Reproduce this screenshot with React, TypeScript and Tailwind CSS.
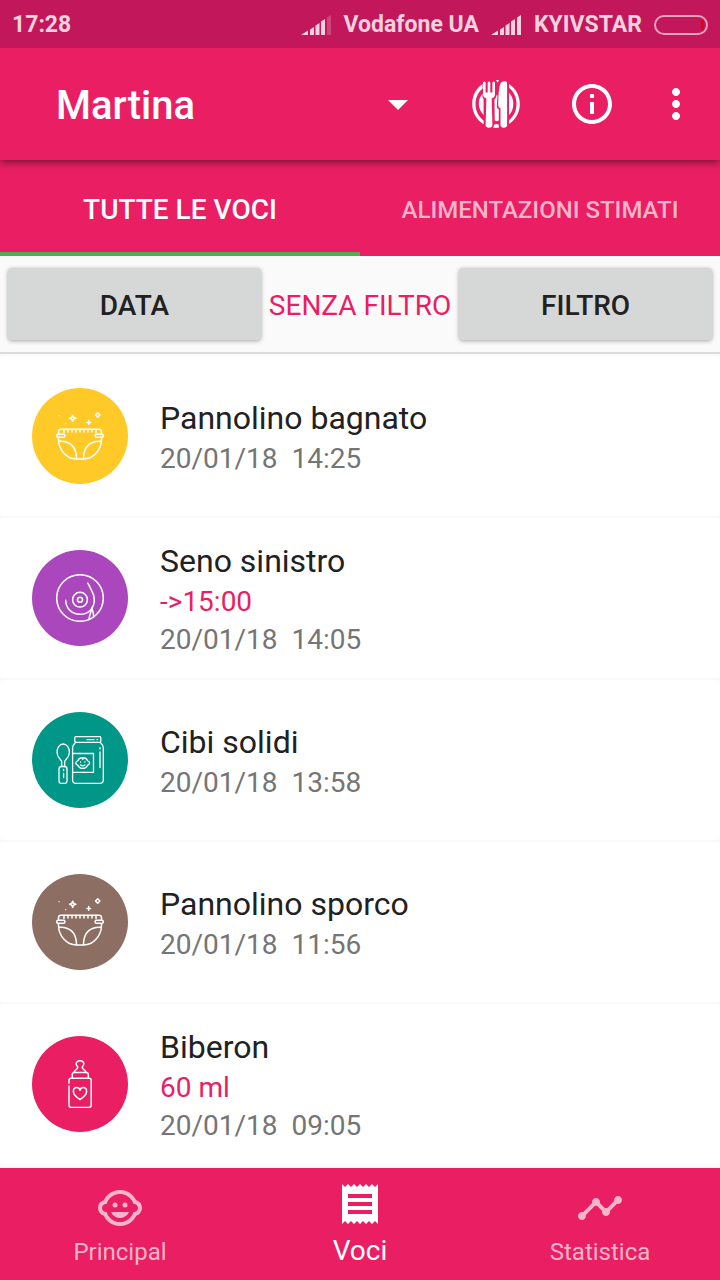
import React, { useState } from 'react';
import {
  MdArrowDropDown,
  MdChildCare,
  MdInfoOutline,
  MdMoreVert,
  MdReceipt,
  MdTimeline,
} from 'react-icons/md';

type IconProps = { className?: string };

type Entry = {
  title: string;
  detail?: string;
  date: string;
  color: string;
  icon: React.ComponentType<IconProps>;
};

const lineIcon = {
  viewBox: '0 0 48 48',
  fill: 'none',
  stroke: 'currentColor',
  strokeWidth: 1.5,
  strokeLinecap: 'round' as const,
  strokeLinejoin: 'round' as const,
  'aria-hidden': true,
};

function DiaperIcon({ className }: IconProps) {
  return (
    <svg {...lineIcon} className={className}>
      {/* sparkles */}
      <path d="M16.7 3.2 Q17 6 19.8 6.3 Q17 6.6 16.7 9.4 Q16.4 6.6 13.6 6.3 Q16.4 6 16.7 3.2Z" />
      <path d="M32.7 8.6v3.6M30.9 10.4h3.6" />
      <path d="M41.7.8 43.9 3 41.7 5.2 39.5 3Z" />
      <path d="M3 3.7h.1M9.7 11.7h.1" strokeWidth={1.2} />
      {/* diaper */}
      <path d="M2.5 22V19.5Q2.5 17.2 5 17.2H43Q45.5 17.2 45.5 19.5V22" />
      <path d="M8 17.5v3M12 17.5v2.4M16 17.5v2.4M20 17.5v2.4M24 17.5v2.4M28 17.5v2.4M32 17.5v2.4M36 17.5v2.4M40 17.5v3" />
      <rect x="0.8" y="22.3" width="8" height="3" rx="1" />
      <rect x="39.2" y="22.3" width="8" height="3" rx="1" />
      <path d="M2.5 25.5V28C3 37.5 10 47 20.5 47H27.5C38 47 45 37.5 45.5 28V25.5" />
      <path d="M3 29.2C13 28.5 20.5 34 20.5 46.5M45 29.2C35 28.5 27.5 34 27.5 46.5" />
    </svg>
  );
}

function BreastIcon({ className }: IconProps) {
  return (
    <svg {...lineIcon} className={className}>
      <circle cx="24" cy="24" r="23.3" />
      <circle cx="24" cy="25.7" r="7.4" />
      <circle cx="24" cy="25.7" r="2.5" />
      <path d="M9.7 26.3C9.8 34.5 16 40.3 24 40.3C32.5 40.3 38.3 34 38.3 26C38.3 19.5 35.5 16.5 34.2 13.8C33.5 12.2 32.8 10.5 31.8 9.2" />
      <path d="M36 33.5C35.5 38 33.6 39 33 45.5M36.2 33.5C36.2 37.5 37.8 38.5 37.6 43" />
    </svg>
  );
}

function JarIcon({ className }: IconProps) {
  return (
    <svg {...lineIcon} strokeWidth={1.3} className={className}>
      {/* spoon */}
      <path d="M5.7 30.5V25.6C5.7 24.2 1 21.8 1 16.3C1 11.6 3.7 8 7.2 8S13.4 11.6 13.4 16.3C13.4 21.8 8.7 24.2 8.7 25.6V30.5" />
      <rect x="3" y="30.5" width="8" height="17" rx="2.5" />
      <path d="M7.6 33.5v1.2M7.6 37.5v4.2" />
      {/* jar */}
      <rect x="18.8" y="0.7" width="26" height="5.6" rx="1" />
      <path d="M31 3.7h7M41 3.7h.6" />
      <path d="M19.5 6.5C18 8 16.6 9 16.6 12V44Q16.6 47.4 20 47.4H44Q47.3 47.4 47.3 44V12C47.3 9 45.8 8 44.3 6.5" />
      <path d="M44 11.6v1.3M44 16v15.6" />
      <path d="M17 17.5H37.5V36.3H17" />
      {/* baby face on the label */}
      <path d="M22 24.5C23.2 20.8 30.2 20.8 31.4 24.5C34.4 26 34.4 28 31.4 29.4C29.6 33.4 23.8 33.4 22 29.4C19 28 19 26 22 24.5Z" />
      <path d="M24.5 26h.1M28.9 26h.1M24.6 29q2.1 1.6 4.2 0M26.8 22v1.6" />
    </svg>
  );
}

function BottleIcon({ className }: IconProps) {
  return (
    <svg {...lineIcon} className={className}>
      <path d="M18 12.5C18 10 21.8 9.5 21.8 7.2C21.2 6.2 20.2 5.3 20.2 4C20.2 2 22 .7 24 .7S27.8 2 27.8 4C27.8 5.3 26.8 6.2 26.2 7.2C26.2 9.5 30 10 30 12.5" />
      <path d="M16.3 18V14.5Q16.3 12.6 18.2 12.6H30.4Q32.3 12.6 32.3 14.5V18" />
      <path d="M13 23.3V20.5Q13 18.3 15.2 18.3H33Q35.2 18.3 35.2 20.5V45.2Q35.2 47.4 33 47.4H15.2Q13 47.4 13 45.2V26" />
      <path d="M24 39.5C20 37 17.4 34.5 17.4 31.5C17.4 29.3 18.8 27.6 20.7 27.6C22.3 27.6 23.5 28.6 24 30.2C24.5 28.6 25.7 27.6 27.3 27.6C29.2 27.6 30.6 29.3 30.6 31.5C30.6 34.5 28 37 24 39.5Z" />
    </svg>
  );
}

function PlateIcon({ className }: IconProps) {
  return (
    <svg viewBox="0 0 48 48" fill="currentColor" className={className} aria-hidden="true">
      {/* plate rim */}
      <path d="M10.6 4C4 8.3.2 15.6.2 24S4.6 40.3 11.6 44.2V40.4C6.6 36.8 3.5 30.9 3.5 24C3.5 17.6 6.2 12 10.6 8.4Z" />
      <path d="M37 3.9C43.7 8.2 47.8 15.5 47.8 24S43.7 39.8 37 44.1V40.2C41.6 36.6 44.5 30.8 44.5 24S41.6 11.4 37 7.8Z" />
      <path d="M10.4 13.8C8.1 16.5 6.8 20 6.8 24S8.8 32.1 11.6 34.9V19.2Q10.4 17.6 10.4 16Z" />
      <path d="M37 12.8C39.8 15.7 41.3 19.5 41.3 24S39.8 32.3 37 35.2Z" />
      {/* fork */}
      <path d="M11 2.4Q12.3 0.8 13.6 2.4V12.4H15.7V2.4Q17 .8 18.3 2.4V12.4H20.4V2.4Q21.7 .8 23 2.4V14Q23 17.5 19.7 18.5L20.4 45Q20.3 47.8 17 47.8T13.6 45L14.4 18.5Q11 17.5 11 14Z" />
      {/* knife */}
      <path d="M26.2 25.5Q26.4 6 29 2.4Q31.5 .6 34.4 1.6Q35.1 2.2 35.1 4V45Q35 47.8 31.8 47.8T28.5 45V28.5Q26.2 27.5 26.2 25.5Z" />
      {/* plate between the cutlery */}
      <path d="M24 .1H27L25.6 2.8Z" />
      <path d="M22.4 19.5Q24.2 18 24.5 15.2H25.5L24.8 26.5Q24.8 28.4 26.8 29.3V40.5L25 41.2L22.7 40.5Z" />
      <path d="M22.3 44.4Q24.4 43.4 26.6 44.4L26.9 47.8H21.2Z" />
    </svg>
  );
}

function SignalIcon({ weak = false }: { weak?: boolean }) {
  return (
    <svg viewBox="0 0 31 22" fill="currentColor" className="h-[22px] w-[31px]" aria-hidden="true">
      <path d="M0 21 7 16.5V21ZM9 15.5 13 13V21H9ZM14.5 11.5 18.5 9V21H14.5ZM20 7.5 24 5V21H20Z" />
      <path d="M26 3.5 30 1V21H26Z" opacity={weak ? 0.25 : 1} />
    </svg>
  );
}

const entries: Entry[] = [
  { title: 'Pannolino bagnato', date: '20/01/18  14:25', color: 'bg-[#ffca28]', icon: DiaperIcon },
  { title: 'Seno sinistro', detail: '->15:00', date: '20/01/18  14:05', color: 'bg-[#ab47bc]', icon: BreastIcon },
  { title: 'Cibi solidi', date: '20/01/18  13:58', color: 'bg-[#009688]', icon: JarIcon },
  { title: 'Pannolino sporco', date: '20/01/18  11:56', color: 'bg-[#8d6e63]', icon: DiaperIcon },
  { title: 'Biberon', detail: '60 ml', date: '20/01/18  09:05', color: 'bg-[#e91e63]', icon: BottleIcon },
];

const filterButton =
  'h-[72px] flex-1 rounded-sm bg-[#d6d8d7] pt-1 text-[28px] font-medium text-[#212121] shadow-[0_1px_4px_rgba(0,0,0,0.35)]';

function StatusBar() {
  return (
    <div className="z-20 flex h-12 items-center bg-[#c2185b] px-3 pt-0.5 text-[23px] font-bold text-[#f3d1de]">
      <span className="flex-1">17:28</span>
      <SignalIcon weak />
      <span className="mx-3">Vodafone UA</span>
      <SignalIcon />
      <span className="mx-3">KYIVSTAR</span>
      <span className="flex h-5 w-[54px] items-center justify-end rounded-full border-2 border-[#e8a3bd] pr-0.5">
        <span className="h-2.5 w-[3px] bg-[#e60012]" />
      </span>
    </div>
  );
}

function EntryRow({ entry }: { entry: Entry }) {
  const Icon = entry.icon;
  return (
    <li className="flex h-40 items-center gap-8 rounded-sm bg-white px-8">
      <span className={`flex size-24 shrink-0 items-center justify-center rounded-full text-white ${entry.color}`}>
        <Icon className="size-12" />
      </span>
      <div className="pt-0.5 text-[28px] leading-[38px]">
        <h2 className="text-[32px] leading-[44px] text-[#212121]">{entry.title}</h2>
        {entry.detail && <p className="text-[#e91e63]">{entry.detail}</p>}
        <p className="whitespace-pre text-[#757575]">{entry.date}</p>
      </div>
    </li>
  );
}

export default function App() {
  const [tab, setTab] = useState('tutte');

  return (
    <div className="flex min-h-screen flex-col bg-[#fafafa] font-[Roboto,sans-serif]">
      <StatusBar />

      <header className="z-10 flex h-28 items-center bg-[#e91e63] text-white shadow-[0_2px_8px_rgba(0,0,0,0.5)]">
        <div className="relative mr-[50px] ml-14 flex-1">
          <select
            aria-label="Martina"
            className="h-16 w-full appearance-none bg-transparent pt-1 text-[40px] font-medium outline-none"
          >
            <option>Martina</option>
          </select>
          <MdArrowDropDown className="pointer-events-none absolute top-2 right-0 size-12" />
        </div>
        <button type="button" aria-label="Alimentazione">
          <PlateIcon className="size-12" />
        </button>
        <button type="button" aria-label="Info" className="ml-12">
          <MdInfoOutline className="size-12" />
        </button>
        <button type="button" aria-label="Menu" className="mr-5 ml-9">
          <MdMoreVert className="size-12" />
        </button>
      </header>

      <div role="tablist" className="grid h-24 grid-cols-2 bg-[#e91e63]">
        <button
          type="button"
          role="tab"
          aria-selected={tab === 'tutte'}
          onClick={() => setTab('tutte')}
          className={`border-b-4 pt-2 font-medium ${
            tab === 'tutte' ? 'border-[#4caf50] text-[28px] text-white' : 'border-transparent text-2xl text-[#f8b4ca]'
          }`}
        >
          TUTTE LE VOCI
        </button>
        <button
          type="button"
          role="tab"
          aria-selected={tab === 'stimati'}
          onClick={() => setTab('stimati')}
          className={`border-b-4 pt-2 font-medium ${
            tab === 'stimati' ? 'border-[#4caf50] text-[28px] text-white' : 'border-transparent text-2xl text-[#f8b4ca]'
          }`}
        >
          ALIMENTAZIONI STIMATI
        </button>
      </div>

      <div className="flex h-[98px] items-center gap-2 border-b-2 border-[#dcdcdc] px-2">
        <button type="button" className={filterButton}>
          DATA
        </button>
        <span className="pt-1 text-[28px] text-[#e91e63]">SENZA FILTRO</span>
        <button type="button" className={filterButton}>
          FILTRO
        </button>
      </div>

      <ul className="flex flex-1 flex-col gap-0.5 pt-0.5">
        {entries.map((entry) => (
          <EntryRow key={entry.title} entry={entry} />
        ))}
      </ul>

      <nav className="grid h-28 grid-cols-3 bg-[#e91e63] text-2xl text-[#f8b4ca]">
        <a href="#principal" className="flex flex-col items-center pt-4">
          <MdChildCare className="size-12" />
          <span className="leading-10">Principal</span>
        </a>
        <a href="#voci" className="flex flex-col items-center pt-3 text-[28px] text-white">
          <MdReceipt className="size-12" />
          <span className="leading-[46px]">Voci</span>
        </a>
        <a href="#statistica" className="flex flex-col items-center pt-4">
          <MdTimeline className="size-12" />
          <span className="leading-10">Statistica</span>
        </a>
      </nav>
    </div>
  );
}
